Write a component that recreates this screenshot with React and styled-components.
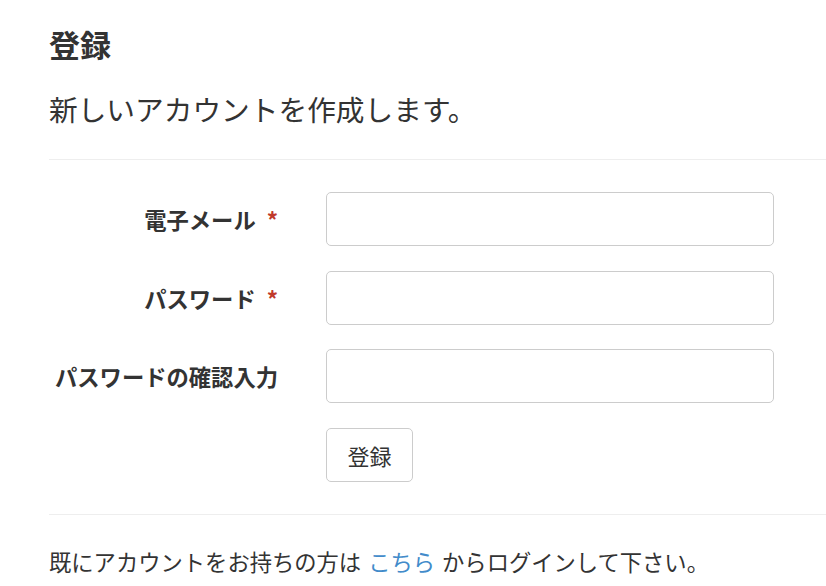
import React from "react";
import styled, { createGlobalStyle } from "styled-components";

const Global = createGlobalStyle`
  html, body { margin: 0; padding: 0; background: #fff; }
  body {
    font-family: "Noto Sans CJK JP", "Noto Sans", sans-serif;
    color: #333;
    font-size: 22px;
  }
  * { box-sizing: border-box; }
`;

const Page = styled.div`
  padding: 24px 0 0 49px;
`;

const Title = styled.h3`
  margin: 0;
  font-size: 31px;
  line-height: 40px;
  font-weight: 700;
`;

const Lead = styled.p`
  margin: 25px 0 0;
  font-size: 28.7px;
  line-height: 40px;
  font-weight: 400;
`;

const Rule = styled.hr`
  margin: ${(p) => p.$top}px 0 0;
  border: 0;
  border-top: 1px solid #eee;
  height: 0;
`;

const Form = styled.form`
  margin-top: 32px;
  display: grid;
  grid-template-columns: 229px 448px;
  column-gap: 48px;
  row-gap: 24.67px;
  align-items: center;
`;

const Label = styled.label`
  text-align: right;
  font-weight: 700;
  font-size: 22.3px;
  line-height: 30px;
  white-space: nowrap;
`;

const Required = styled.span`
  color: #c0392b;
  margin-left: 11px;
`;

const Input = styled.input`
  display: block;
  width: 100%;
  height: 54px;
  border: 1px solid #ccc;
  border-radius: 5px;
  background: #fff;
  font: inherit;
  padding: 8px 16px;
`;

const Button = styled.button`
  grid-column: 2;
  justify-self: start;
  height: 54px;
  width: 87px;
  border: 1px solid #ccc;
  border-radius: 5px;
  background: #fff;
  color: #333;
  font-family: "Noto Sans CJK JP", sans-serif;
  font-size: 22px;
  padding: 0;
`;

const Footer = styled.p`
  margin: 26px 0 0;
  font-size: 22.3px;
  line-height: 40px;
  word-spacing: 2px;
`;

const Link = styled.a`
  color: #428bca;
  text-decoration: none;
`;

const fields = [
  { id: "email", label: "電子メール", required: true, type: "email" },
  { id: "password", label: "パスワード", required: true, type: "password" },
  { id: "confirm", label: "パスワードの確認入力", required: false, type: "password" },
];

export default function App() {
  return (
    <>
      <Global />
      <Page>
        <Title>登録</Title>
        <Lead>新しいアカウントを作成します。</Lead>
        <Rule $top={30} />
        <Form onSubmit={(e) => e.preventDefault()}>
          {fields.map((f) => (
            <React.Fragment key={f.id}>
              <Label htmlFor={f.id}>
                {f.label}
                {f.required && <Required>*</Required>}
              </Label>
              <Input id={f.id} type={f.type} />
            </React.Fragment>
          ))}
          <Button type="submit">登録</Button>
        </Form>
        <Rule $top={32} />
        <Footer>
          既にアカウントをお持ちの方は <Link href="#">こちら</Link> からログインして下さい。
        </Footer>
      </Page>
    </>
  );
}
